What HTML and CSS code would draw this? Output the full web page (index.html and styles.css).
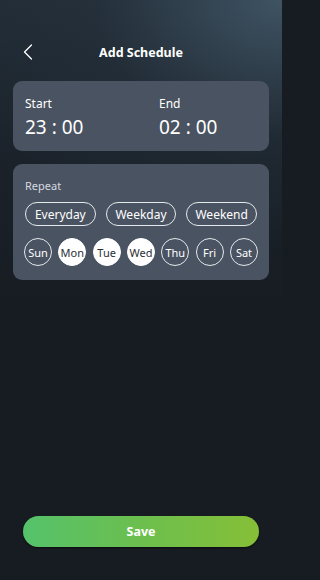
FILE: index.html
```html
<!DOCTYPE html>
<html lang="en">
<head>
<meta charset="utf-8">
<title>Add Schedule</title>
<link rel="stylesheet" href="styles.css">
</head>
<body>
<div class="app">
  <header class="header">
    <button class="back" aria-label="Back">
      <svg width="10" height="16" viewBox="0 0 10 16"><path d="M8.5 1 L1.5 8 L8.5 15" fill="none" stroke="#fff" stroke-width="1.3" stroke-linecap="round" stroke-linejoin="round"/></svg>
    </button>
    <h1 class="title">Add Schedule</h1>
  </header>

  <section class="card times">
    <div class="time-col">
      <div class="label">Start</div>
      <div class="time">23 : 00</div>
    </div>
    <div class="time-col">
      <div class="label">End</div>
      <div class="time">02 : 00</div>
    </div>
  </section>

  <section class="card repeat">
    <div class="repeat-label">Repeat</div>
    <div class="pills">
      <span class="pill">Everyday</span>
      <span class="pill">Weekday</span>
      <span class="pill">Weekend</span>
    </div>
    <div class="days">
      <span class="day">Sun</span>
      <span class="day on">Mon</span>
      <span class="day on">Tue</span>
      <span class="day on">Wed</span>
      <span class="day">Thu</span>
      <span class="day">Fri</span>
      <span class="day">Sat</span>
    </div>
  </section>

  <button class="save">Save</button>
</div>
</body>
</html>
```
FILE: styles.css
```css
* { box-sizing: border-box; }
html, body { margin: 0; padding: 0; }
html, body {
  background: #171c22;
}
body {
  font-family: "Noto Sans", "Open Sans", "Liberation Sans", sans-serif;
  color: #fff;
}
.app {
  width: 282px;
  height: 580px;
  display: flex;
  flex-direction: column;
  padding: 0 13px 33px 13px;
  background:
    radial-gradient(ellipse 340px 250px at 100% 0%, rgba(72, 96, 114, 0.75), rgba(40, 54, 66, 0.35) 55%, rgba(23, 28, 34, 0) 100%),
    linear-gradient(180deg, #222c36 0%, #1a2129 30%, #171c22 55%, #171c22 100%);
}
.header {
  position: relative;
  height: 40px;
  margin-top: 32px;
  display: flex;
  align-items: center;
  justify-content: center;
}
.back {
  position: absolute;
  left: 10px;
  top: 12px;
  padding: 0;
  border: 0;
  background: none;
  display: flex;
}
.title {
  margin: 0;
  font-size: 12.5px;
  font-weight: 700;
  letter-spacing: 0;
}
.card {
  background: #4a5361;
  border-radius: 9px;
}
.times {
  margin-top: 9px;
  height: 70px;
  padding: 15px 12px 0 12px;
  display: grid;
  grid-template-columns: 134px 1fr;
}
.label {
  font-size: 12px;
  line-height: 16px;
}
.time {
  margin-top: 3px;
  font-size: 19px;
  line-height: 24px;
}
.repeat {
  margin-top: 13px;
  padding: 14px 11px 14px 12px;
}
.repeat-label {
  font-size: 11px;
  line-height: 16px;
  color: #d6dae0;
}
.pills {
  margin-top: 8px;
  display: grid;
  grid-template-columns: repeat(3, 1fr);
  gap: 10px;
  padding-right: 1px;
}
.pill {
  height: 24px;
  border: 1.5px solid #e6e9ed;
  border-radius: 12px;
  font-size: 12px;
  display: flex;
  align-items: center;
  justify-content: center;
}
.days {
  margin: 12px 0 0 -1px;
  display: flex;
  justify-content: space-between;
}
.day {
  width: 28px;
  height: 28px;
  border-radius: 50%;
  border: 1.5px solid #e6e9ed;
  font-size: 11px;
  display: flex;
  align-items: center;
  justify-content: center;
}
.day.on {
  background: #fff;
  border-color: #fff;
  color: #2b2f36;
}
.save {
  margin: auto 10px 0 10px;
  height: 31px;
  border: 0;
  border-radius: 16px;
  background: linear-gradient(90deg, #55c26b 0%, #6cbf4e 50%, #86bf37 100%);
  box-shadow: 0 1px 2px rgba(0, 0, 0, 0.6);
  color: #fff;
  font-family: inherit;
  font-size: 12.5px;
  font-weight: 700;
}
```
